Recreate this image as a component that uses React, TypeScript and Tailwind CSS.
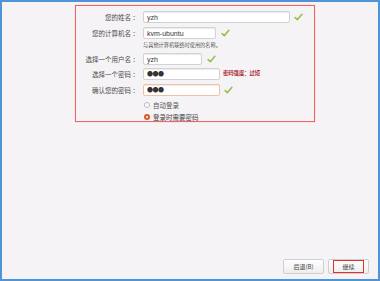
function Check({ className = "" }: { className?: string }) {
  return (
    <svg viewBox="0 0 10 9" className={`h-[8px] w-[9px] ${className}`}>
      <path
        d="M1.2 5.2 L3.7 7.5 L8.8 1.4"
        fill="none"
        stroke="#95bf45"
        strokeWidth="1.7"
        strokeLinecap="round"
        strokeLinejoin="round"
      />
    </svg>
  );
}

function Field({
  label,
  value,
  width,
  dots,
  warn,
  className = "",
  children,
}: {
  label: string;
  value: string;
  width: string;
  dots?: boolean;
  warn?: boolean;
  className?: string;
  children?: React.ReactNode;
}) {
  return (
    <div className={`flex h-[12px] items-center ${className}`}>
      <span className="w-[64px] pr-[1px] text-right text-[6.5px] leading-none text-[#4a4a4a]">{label}</span>
      <div
        className={`ml-[3px] flex h-[12px] items-center rounded-[2px] border bg-white px-[3px] shadow-[inset_0_1px_1px_rgba(0,0,0,0.08)] ${width} ${
          warn ? "border-[#f2bfa8]" : "border-[#d2d2d2]"
        }`}
      >
        {dots ? (
          <span className="text-[6px] leading-none tracking-[-0.5px] text-[#333]">●●●</span>
        ) : (
          <span className="font-['Liberation_Sans'] text-[7px] leading-none text-[#333]">{value}</span>
        )}
      </div>
      {children}
    </div>
  );
}

export default function App() {
  return (
    <div className="flex h-[281px] w-[380px] flex-col border-2 border-[#4f94d8] bg-[#f6f3f6] font-['Noto_Sans_CJK_SC',sans-serif]">
      <div className="ml-[73px] mt-[3px] h-[117px] w-[240px] border border-[#f06464] pt-[5px] shadow-[0_0_1px_#f7a0a0]">
        <Field label="您的姓名 ：" value="yzh" width="w-[147px]">
          <Check className="ml-[4px]" />
        </Field>
        <Field label="您的计算机名 ：" value="kvm-ubuntu" width="w-[73px]" className="mt-[4px]">
          <Check className="ml-[5px]" />
        </Field>
        <div className="mt-[2px] flex h-[8px] items-center pl-[67px] text-[5.2px] leading-none text-[#555]">
          与其他计算机联络时使用的名称。
        </div>
        <Field label="选择一个用户名 ：" value="yzh" width="w-[59px]" className="mt-[4px]">
          <Check className="ml-[5px]" />
        </Field>
        <Field label="选择一个密码 ：" value="" dots width="w-[77px]" className="mt-[3px]">
          <span className="ml-[3px] text-[5.3px] font-bold leading-none text-[#a3262b]">密码强度：过短</span>
        </Field>
        <Field label="确认您的密码 ：" value="" dots warn width="w-[77px]" className="mt-[4px]">
          <Check className="ml-[4px]" />
        </Field>
        <div className="mt-[4px] flex h-[10px] items-center pl-[68px]">
          <span className="h-[6px] w-[6px] rounded-full border border-[#bbb] bg-white" />
          <span className="ml-[3px] text-[6.5px] leading-none text-[#555]">自动登录</span>
        </div>
        <div className="mt-[2px] flex h-[10px] items-center pl-[68px]">
          <span className="flex h-[6px] w-[6px] items-center justify-center rounded-full bg-[#dd5a2a]">
            <span className="h-[2px] w-[2px] rounded-full bg-white" />
          </span>
          <span className="ml-[3px] text-[6.5px] leading-none text-[#444]">登录时需要密码</span>
        </div>
      </div>
      <div className="mt-auto flex justify-end gap-[4px] pb-[5px] pr-[9px]">
        <button className="flex h-[15px] w-[41px] items-center justify-center rounded-[2px] border border-[#cfcfcf] bg-gradient-to-b from-white to-[#eeeeee] text-[6px] leading-none text-[#444]">
          后退(B)
        </button>
        <button className="flex h-[15px] w-[41px] items-center justify-center rounded-[2px] border border-[#cfcfcf] bg-gradient-to-b from-white to-[#eeeeee]">
          <span className="flex h-[13px] w-[31px] items-center justify-center border border-[#e53030] text-[6px] leading-none text-[#444]">
            继续
          </span>
        </button>
      </div>
    </div>
  );
}
